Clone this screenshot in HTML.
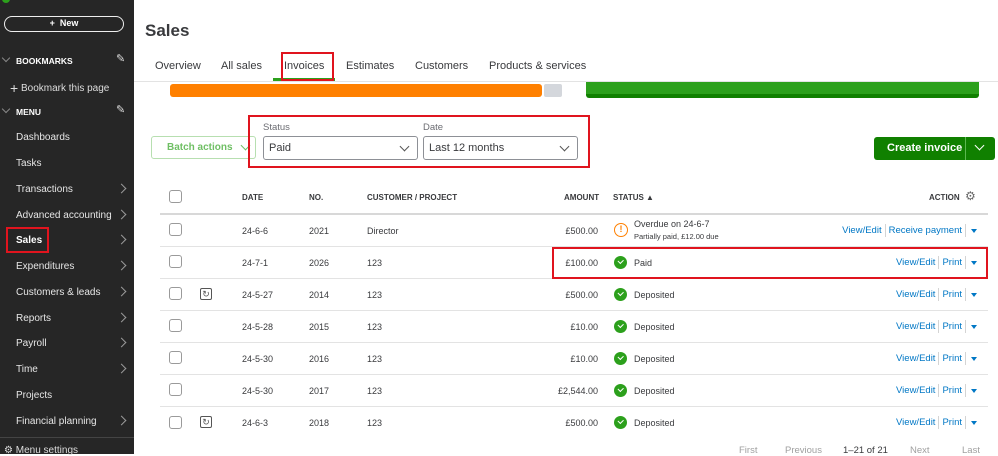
<!DOCTYPE html>
<html><head><meta charset="utf-8"><style>
*{margin:0;padding:0;box-sizing:border-box}
body{width:998px;height:454px;overflow:hidden;background:#fff;font-family:"Liberation Sans",Arial,sans-serif;position:relative;color:#393a3d}
.a{position:absolute;white-space:nowrap}
#sb{position:absolute;left:0;top:0;width:134px;height:454px;background:#262626;color:#e6e6e6;font-size:10px}
.si{position:absolute;left:16px}
.chev{position:absolute;left:118px;width:7px;height:7px;border-right:1.3px solid #999;border-top:1.3px solid #999;transform:rotate(45deg)}
.cb{position:absolute;left:169px;width:13px;height:13px;border:1.2px solid #9a9a9a;border-radius:3px;background:#fff}
.t{font-size:9px;color:#393a3d}
.h{font-size:8px;font-weight:bold;color:#393a3d}
.line{position:absolute;left:160px;width:828px;height:1px;background:#e3e3e3}
.ck{position:absolute;left:614px;width:13px;height:13px;border-radius:50%;background:#2ca01c}
.ck:after{content:"";position:absolute;left:4px;top:3px;width:4px;height:2.5px;border-left:1.5px solid #fff;border-bottom:1.5px solid #fff;transform:rotate(-45deg)}
.lk{color:#0077c5;font-size:9.5px}
.sep{display:inline-block;width:1px;height:13px;background:#d4d4d4;vertical-align:middle;margin:0 3px}
.tri{display:inline-block;width:0;height:0;border-left:3.5px solid transparent;border-right:3.5px solid transparent;border-top:4px solid #0077c5;vertical-align:middle;margin-left:2px}
.rf{position:absolute;left:200px;width:12px;height:12px;border:1.2px solid #555;border-radius:2px;font-size:9px;line-height:10px;text-align:center;color:#555}
.red{position:absolute;border:2px solid #e0141e}
.sel{position:absolute;top:136px;height:24px;border:1px solid #8d9096;border-radius:3px;font-size:11px;padding:5px 0 0 5px;color:#393a3d}
.dv{position:absolute;width:7px;height:7px;border-right:1.4px solid #555;border-bottom:1.4px solid #555;transform:rotate(45deg)}
</style></head><body>
<div id="sb">
<div class="a" style="left:2px;top:-5px;width:8px;height:8px;border-radius:50%;background:#2ca01c"></div>
<div class="a" style="left:4px;top:16px;width:120px;height:16px;border:1.5px solid #eee;border-radius:9px;text-align:center;font-size:9px;line-height:13px;font-weight:bold;color:#fff">+&nbsp; New</div>
<div class="a" style="left:3px;top:55px;width:6px;height:6px;border-right:1px solid #888;border-bottom:1px solid #888;transform:rotate(45deg)"></div>
<div class="si" style="top:56px;font-weight:bold;font-size:8.5px;color:#fff">BOOKMARKS</div>
<div class="a" style="left:116px;top:52px;font-size:11px;color:#ddd">✎</div>
<div class="si" style="left:10px;top:80px;font-size:10px;color:#ddd"><span style="font-size:14px;vertical-align:-2px">+</span> Bookmark this page</div>
<div class="a" style="left:3px;top:106px;width:6px;height:6px;border-right:1px solid #888;border-bottom:1px solid #888;transform:rotate(45deg)"></div>
<div class="si" style="top:107px;font-weight:bold;font-size:8.5px;color:#fff">MENU</div>
<div class="a" style="left:116px;top:103px;font-size:11px;color:#ddd">✎</div>
<div class="si" style="top:132px">Dashboards</div>
<div class="si" style="top:158px">Tasks</div>
<div class="si" style="top:184px">Transactions</div><div class="chev" style="top:185px"></div>
<div class="si" style="top:210px">Advanced accounting</div><div class="chev" style="top:211px"></div>
<div class="si" style="top:235px;font-weight:bold;color:#fff">Sales</div><div class="chev" style="top:236px"></div>
<div class="red" style="left:6px;top:227px;width:43px;height:26px"></div>
<div class="si" style="top:261px">Expenditures</div><div class="chev" style="top:262px"></div>
<div class="si" style="top:287px">Customers &amp; leads</div><div class="chev" style="top:288px"></div>
<div class="si" style="top:313px">Reports</div><div class="chev" style="top:314px"></div>
<div class="si" style="top:338px">Payroll</div><div class="chev" style="top:339px"></div>
<div class="si" style="top:364px">Time</div><div class="chev" style="top:365px"></div>
<div class="si" style="top:390px">Projects</div>
<div class="si" style="top:416px">Financial planning</div><div class="chev" style="top:417px"></div>
<div class="a" style="left:0;top:437px;width:134px;height:1px;background:#444"></div>
<div class="si" style="left:4px;top:445px;color:#ddd">⚙ Menu settings</div>
</div>

<div class="a" style="left:145px;top:21px;font-size:17px;font-weight:bold;color:#393a3d">Sales</div>
<div class="a" style="left:155px;top:60px;font-size:11px;color:#393a3d">Overview</div>
<div class="a" style="left:221px;top:60px;font-size:11px">All sales</div>
<div class="a" style="left:284px;top:60px;font-size:11px">Invoices</div>
<div class="a" style="left:346px;top:60px;font-size:11px">Estimates</div>
<div class="a" style="left:415px;top:60px;font-size:11px">Customers</div>
<div class="a" style="left:489px;top:60px;font-size:11px">Products &amp; services</div>
<div class="a" style="left:134px;top:81px;width:864px;height:1px;background:#e3e3e3"></div>
<div class="a" style="left:273px;top:78px;width:62px;height:3px;background:#2ca01c"></div>
<div class="red" style="left:281px;top:52px;width:53px;height:29px"></div>
<div class="a" style="left:170px;top:84px;width:372px;height:13px;background:#ff8000;border-radius:3px"></div>
<div class="a" style="left:544px;top:84px;width:18px;height:13px;background:#d4d7dc;border-radius:2px"></div>
<div class="a" style="left:586px;top:82px;width:393px;height:16px;background:#2ca01c;border-bottom:4px solid #108000;border-radius:0 0 3px 3px"></div>

<div class="a" style="left:151px;top:136px;width:105px;height:23px;border:1px solid #b7dfb0;border-radius:3px;color:#6fbf64;font-size:10px;font-weight:bold;padding:5px 0 0 15px">Batch actions</div>
<div class="dv" style="left:242px;top:142px;border-color:#6fbf64"></div>
<div class="a" style="left:263px;top:122px;font-size:9.5px;color:#6b6c72">Status</div>
<div class="a" style="left:423px;top:122px;font-size:9.5px;color:#6b6c72">Date</div>
<div class="sel" style="left:263px;width:155px">Paid</div><div class="dv" style="left:401px;top:143px"></div>
<div class="sel" style="left:423px;width:155px">Last 12 months</div><div class="dv" style="left:561px;top:143px"></div>
<div class="red" style="left:248px;top:115px;width:342px;height:53px"></div>

<div class="a" style="left:874px;top:137px;width:121px;height:23px;background:#108000;border-radius:3px"></div>
<div class="a" style="left:887px;top:142px;font-size:11px;font-weight:bold;color:#fff">Create invoice</div>
<div class="a" style="left:965px;top:137px;width:1px;height:23px;background:#5cb850"></div>
<div class="a" style="left:976px;top:142px;width:7px;height:7px;border-right:1.5px solid #fff;border-bottom:1.5px solid #fff;transform:rotate(45deg)"></div>

<div class="cb" style="top:190px"></div>
<div class="a h" style="left:242px;top:193px">DATE</div>
<div class="a h" style="left:309px;top:193px">NO.</div>
<div class="a h" style="left:367px;top:193px">CUSTOMER / PROJECT</div>
<div class="a h" style="left:564px;top:193px">AMOUNT</div>
<div class="a h" style="left:613px;top:193px">STATUS ▲</div>
<div class="a h" style="left:929px;top:193px">ACTION</div>
<div class="a" style="left:965px;top:189px;font-size:12px;color:#666">⚙</div>
<div class="line" style="top:213px;height:1.5px;background:#d8d8d8"></div>

<div class="cb" style="top:223px"></div>
<div class="a t" style="left:242px;top:226px">24-6-6</div><div class="a t" style="left:309px;top:226px">2021</div><div class="a t" style="left:367px;top:226px">Director</div>
<div class="a t" style="right:400px;top:226px">£500.00</div>
<div class="a" style="left:614px;top:223px;width:14px;height:14px;border-radius:50%;border:1.5px solid #ff8000;color:#ff8000;font-size:9px;font-weight:bold;text-align:center;line-height:11px">!</div>
<div class="a t" style="left:634px;top:219px">Overdue on 24-6-7</div>
<div class="a" style="left:634px;top:232px;font-size:7.5px;color:#393a3d">Partially paid, £12.00 due</div>
<div class="a lk" style="right:21px;top:224px">View/Edit<span class="sep"></span>Receive payment<span class="sep"></span><span class="tri"></span></div>
<div class="line" style="top:246px"></div>

<div class="cb" style="top:255px"></div>
<div class="a t" style="left:242px;top:258px">24-7-1</div><div class="a t" style="left:309px;top:258px">2026</div><div class="a t" style="left:367px;top:258px">123</div>
<div class="a t" style="right:400px;top:258px">£100.00</div>
<div class="ck" style="top:256px"></div><div class="a t" style="left:634px;top:258px">Paid</div>
<div class="a lk" style="right:21px;top:256px">View/Edit<span class="sep"></span>Print<span class="sep"></span><span class="tri"></span></div>
<div class="line" style="top:278px"></div>
<div class="red" style="left:552px;top:247px;width:436px;height:32px"></div>

<div class="cb" style="top:287px"></div><div class="rf" style="top:288px">↻</div>
<div class="a t" style="left:242px;top:290px">24-5-27</div><div class="a t" style="left:309px;top:290px">2014</div><div class="a t" style="left:367px;top:290px">123</div>
<div class="a t" style="right:400px;top:290px">£500.00</div>
<div class="ck" style="top:288px"></div><div class="a t" style="left:634px;top:290px">Deposited</div>
<div class="a lk" style="right:21px;top:288px">View/Edit<span class="sep"></span>Print<span class="sep"></span><span class="tri"></span></div>
<div class="line" style="top:310px"></div>

<div class="cb" style="top:319px"></div>
<div class="a t" style="left:242px;top:322px">24-5-28</div><div class="a t" style="left:309px;top:322px">2015</div><div class="a t" style="left:367px;top:322px">123</div>
<div class="a t" style="right:400px;top:322px">£10.00</div>
<div class="ck" style="top:320px"></div><div class="a t" style="left:634px;top:322px">Deposited</div>
<div class="a lk" style="right:21px;top:320px">View/Edit<span class="sep"></span>Print<span class="sep"></span><span class="tri"></span></div>
<div class="line" style="top:342px"></div>

<div class="cb" style="top:351px"></div>
<div class="a t" style="left:242px;top:354px">24-5-30</div><div class="a t" style="left:309px;top:354px">2016</div><div class="a t" style="left:367px;top:354px">123</div>
<div class="a t" style="right:400px;top:354px">£10.00</div>
<div class="ck" style="top:352px"></div><div class="a t" style="left:634px;top:354px">Deposited</div>
<div class="a lk" style="right:21px;top:352px">View/Edit<span class="sep"></span>Print<span class="sep"></span><span class="tri"></span></div>
<div class="line" style="top:374px"></div>

<div class="cb" style="top:383px"></div>
<div class="a t" style="left:242px;top:386px">24-5-30</div><div class="a t" style="left:309px;top:386px">2017</div><div class="a t" style="left:367px;top:386px">123</div>
<div class="a t" style="right:400px;top:386px">£2,544.00</div>
<div class="ck" style="top:384px"></div><div class="a t" style="left:634px;top:386px">Deposited</div>
<div class="a lk" style="right:21px;top:384px">View/Edit<span class="sep"></span>Print<span class="sep"></span><span class="tri"></span></div>
<div class="line" style="top:406px"></div>

<div class="cb" style="top:416px"></div><div class="rf" style="top:416px">↻</div>
<div class="a t" style="left:242px;top:418px">24-6-3</div><div class="a t" style="left:309px;top:418px">2018</div><div class="a t" style="left:367px;top:418px">123</div>
<div class="a t" style="right:400px;top:418px">£500.00</div>
<div class="ck" style="top:416px"></div><div class="a t" style="left:634px;top:418px">Deposited</div>
<div class="a lk" style="right:21px;top:416px">View/Edit<span class="sep"></span>Print<span class="sep"></span><span class="tri"></span></div>

<div class="a" style="left:739px;top:445px;font-size:9.5px;color:#a0a0a0">First</div>
<div class="a" style="left:785px;top:445px;font-size:9.5px;color:#a0a0a0">Previous</div>
<div class="a" style="left:843px;top:445px;font-size:9.5px;color:#393a3d">1–21 of 21</div>
<div class="a" style="left:910px;top:445px;font-size:9.5px;color:#a0a0a0">Next</div>
<div class="a" style="left:962px;top:445px;font-size:9.5px;color:#a0a0a0">Last</div>
</body></html>
